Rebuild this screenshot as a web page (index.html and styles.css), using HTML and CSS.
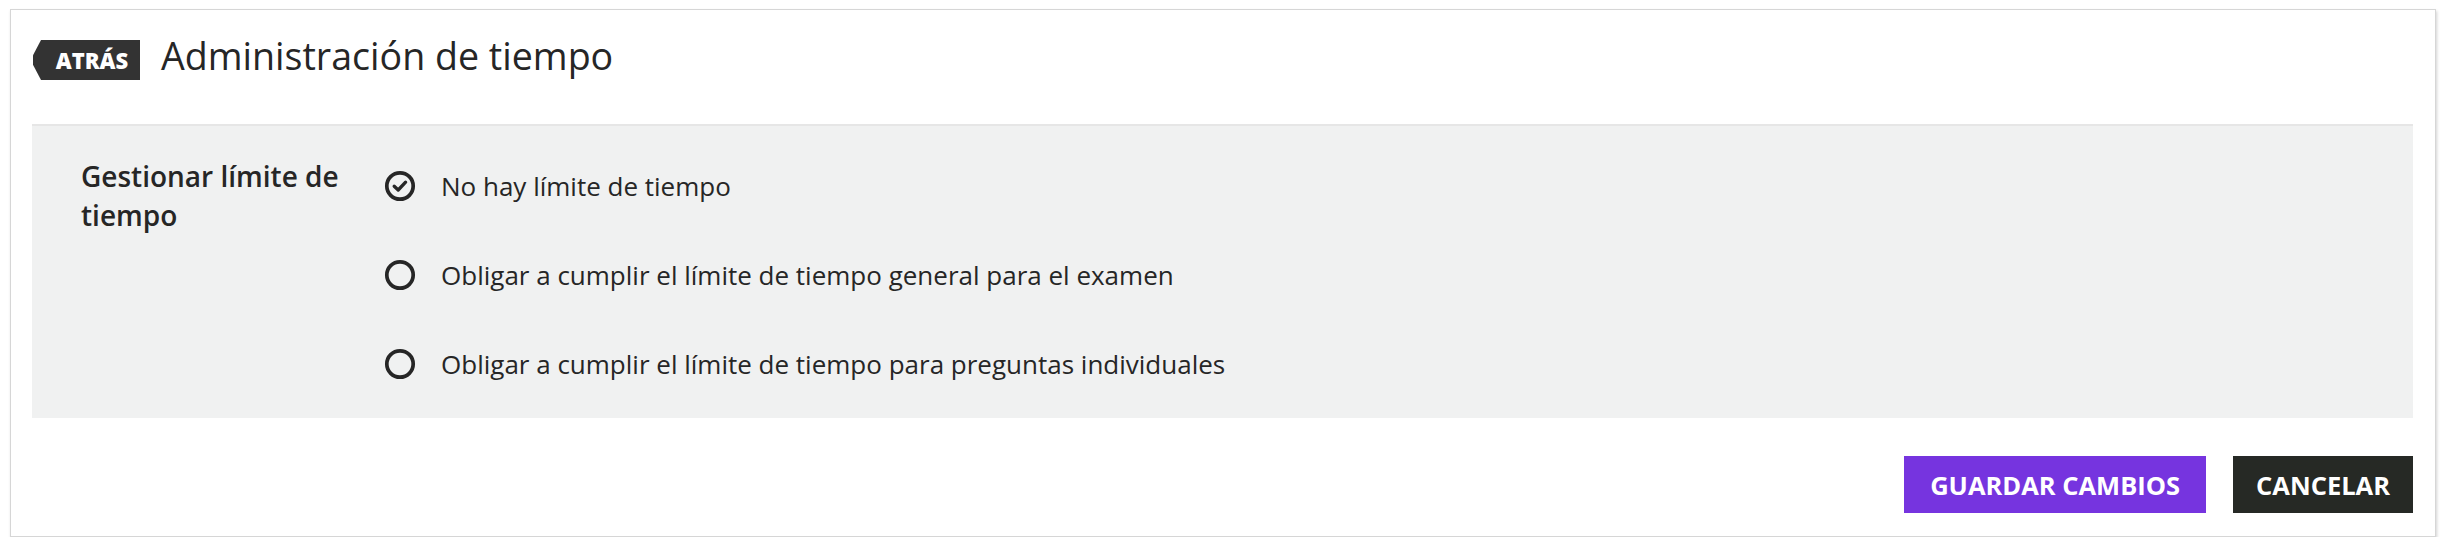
FILE: index.html
```html
<!DOCTYPE html>
<html lang="es">
<head>
<meta charset="utf-8">
<title>Administración de tiempo</title>
<link rel="stylesheet" href="styles.css">
</head>
<body>
<div class="card">
  <header class="header">
    <span class="back">ATRÁS</span>
    <h1 class="title">Administración de tiempo</h1>
  </header>
  <section class="panel">
    <div class="label">Gestionar límite de tiempo</div>
    <div class="options">
      <div class="option">
        <svg class="radio" viewBox="0 0 32 32" width="32" height="32"><circle cx="16" cy="16" r="13.2" fill="none" stroke="#262626" stroke-width="3.7"/><path d="M10.2 16.2 L14.2 20 L21.6 12.2" fill="none" stroke="#262626" stroke-width="3.3" stroke-linecap="round" stroke-linejoin="round"/></svg>
        <span class="opt-text">No hay límite de tiempo</span>
      </div>
      <div class="option">
        <svg class="radio" viewBox="0 0 32 32" width="32" height="32"><circle cx="16" cy="16" r="13.2" fill="none" stroke="#262626" stroke-width="3.7"/></svg>
        <span class="opt-text">Obligar a cumplir el límite de tiempo general para el examen</span>
      </div>
      <div class="option">
        <svg class="radio" viewBox="0 0 32 32" width="32" height="32"><circle cx="16" cy="16" r="13.2" fill="none" stroke="#262626" stroke-width="3.7"/></svg>
        <span class="opt-text">Obligar a cumplir el límite de tiempo para preguntas individuales</span>
      </div>
    </div>
  </section>
  <footer class="footer">
    <button class="btn btn-primary">GUARDAR CAMBIOS</button>
    <button class="btn btn-dark">CANCELAR</button>
  </footer>
</div>
</body>
</html>
```
FILE: styles.css
```css
* { box-sizing: border-box; }
html, body { margin: 0; padding: 0; background: #ffffff; }
body {
  font-family: "Open Sans", "Liberation Sans", sans-serif;
  color: #262626;
  padding: 9px 10px 0 10px;
  width: 2444px;
}
.card {
  width: 2426px;
  height: 528px;
  border: 1px solid #d6d6d6;
  background: #fff;
  box-shadow: 1px 2px 3px rgba(0,0,0,0.18);
  padding: 0 22px 0 21px;
  display: flex;
  flex-direction: column;
}
.header {
  height: 116px;
  display: flex;
  align-items: flex-start;
  padding-top: 30px;
  border-bottom: 2px solid #e6e6e6;
}
.back {
  display: flex;
  align-items: center;
  justify-content: center;
  width: 108px;
  height: 40px;
  padding-left: 12px;
  background: #333333;
  color: #fff;
  font-weight: 800;
  font-size: 22px;
  letter-spacing: 0;
  clip-path: polygon(9px 0, 100% 0, 100% 100%, 9px 100%, 1px 62%, 1px 38%);
}
.title {
  margin: -4px 0 0 21px;
  font-size: 37.6px;
  line-height: 40px;
  font-weight: 400;
  color: #262626;
}
.panel {
  background: #f0f1f1;
  height: 292px;
  display: flex;
  align-items: flex-start;
  padding: 31px 49px 0 49px;
}
.label {
  width: 290px;
  font-size: 28px;
  line-height: 39px;
  font-weight: 600;
  color: #262626;
}
.options {
  margin-left: 13px;
  padding-top: 13px;
  display: flex;
  flex-direction: column;
  gap: 57px;
}
.option {
  display: flex;
  align-items: center;
  height: 32px;
}
.radio { flex: none; display: block; }
.opt-text {
  margin-left: 25px;
  font-size: 26px;
  line-height: 30px;
  color: #262626;
}
.footer {
  display: flex;
  justify-content: flex-end;
  gap: 27px;
  padding-top: 38px;
}
.btn {
  height: 57px;
  border: none;
  font-family: "Open Sans", "Liberation Sans", sans-serif;
  font-weight: 700;
  font-size: 25.5px;
  color: #fff;
  padding: 0 26px;
  cursor: pointer;
}
.btn-primary { background: #7634df; }
.btn-dark { background: #262925; padding: 0 23px; }
```
